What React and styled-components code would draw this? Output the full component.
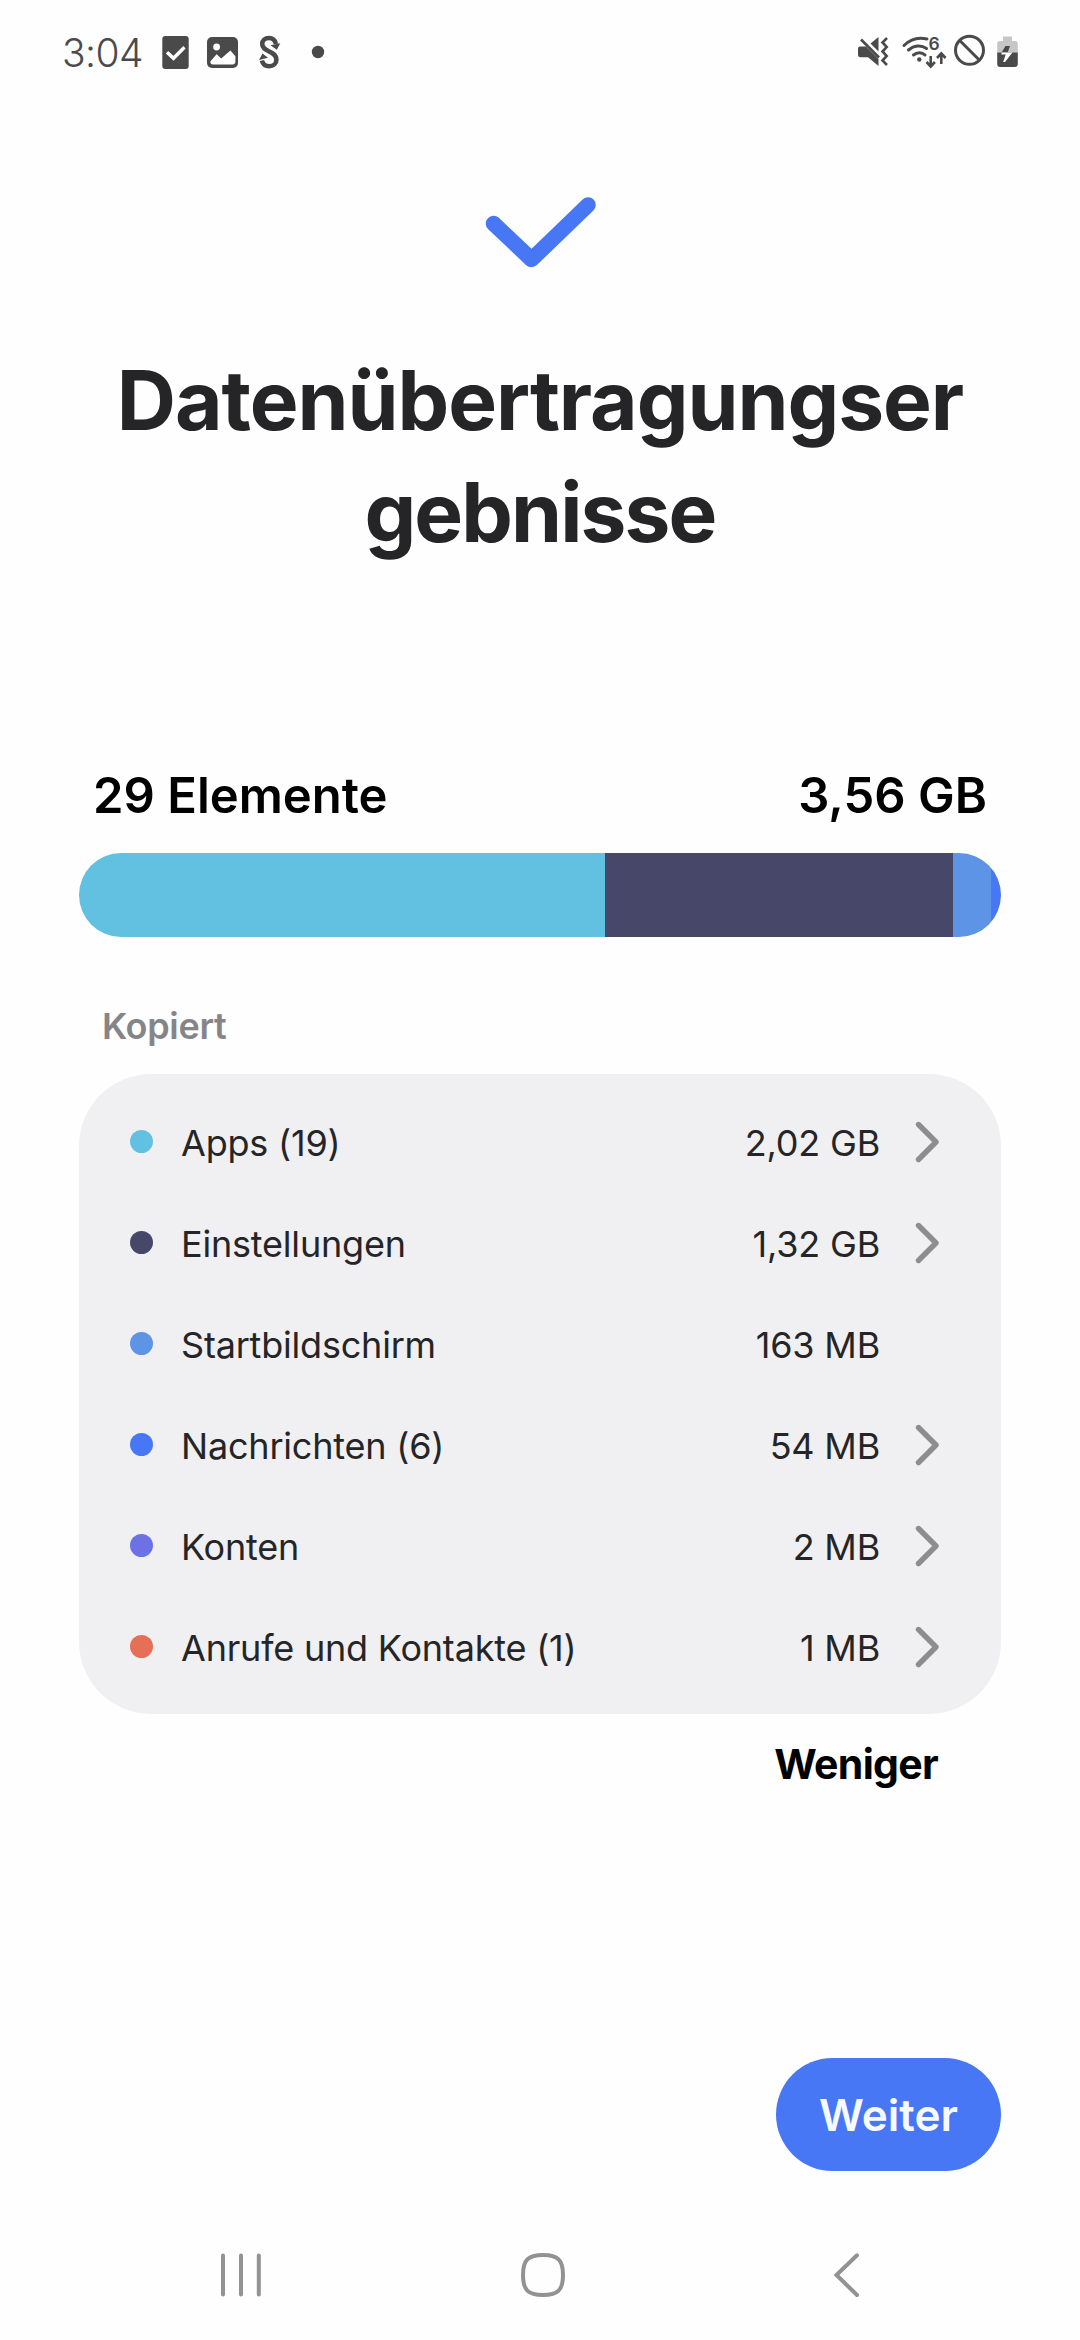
import React from 'react';
import styled, { createGlobalStyle } from 'styled-components'

const GlobalStyle = createGlobalStyle`
    body {
        margin: 0;
        background-color: #fefefe;
        font-family: Inter, Roboto, sans-serif;
    }
`;

const items = [
    { label: 'Apps (19)', size: '2,02 GB', color: '#62c1e1', share: 526, more: true },
    { label: 'Einstellungen', size: '1,32 GB', color: '#474769', share: 348, more: true },
    { label: 'Startbildschirm', size: '163 MB', color: '#5e94e6', share: 38, more: false },
    { label: 'Nachrichten (6)', size: '54 MB', color: '#4777f5', share: 10, more: true },
    { label: 'Konten', size: '2 MB', color: '#6d71e6', share: 0, more: true },
    { label: 'Anrufe und Kontakte (1)', size: '1 MB', color: '#e66f57', share: 0, more: true },
];

const NotificationIcons = () => (
    <svg width="170" height="40" viewBox="158 32 170 40" fill="none">
        <rect x="162.3" y="36" width="26.4" height="33" rx="3" fill="#4a4a4a" />
        <path d="M167 52.3l6.5 6 11-11" stroke="#fff" strokeWidth="3.4" />
        <rect x="207" y="37" width="31" height="31" rx="5" fill="#4a4a4a" />
        <circle cx="216.6" cy="47" r="3.4" fill="#fff" />
        <path d="M210.3 61.5l6.3-7.3 4.6 4.2 9.2-8 5 5.8v5.4q0 2.8-2.8 2.8h-19.5q-2.8 0-2.8-2.9z" fill="#fff" />
        <path d="M276 44c-1-4-3.6-6-7-6-4 0-6.8 2.6-6.800 6 0 4 3.300 5.700 7 7.500 4.200 2 7.200 3.700 7.200 8.200 0 3.800-3 6.600-7.200 6.600-3.700 0-6.400-2.200-7.300-5.800" stroke="#4a4a4a" strokeWidth="4.6" />
        <path d="M270.500 45.300l9.800-2-3.500 6.500zM268 57.800l-9 2.200 3.500-6.500z" fill="#4a4a4a" />
        <circle cx="318" cy="52" r="6.2" fill="#4a4a4a" />
    </svg>
)

const SystemIcons = () => (
    <svg width="166" height="40" viewBox="856 30 166 40" fill="none">
        <path d="M860 46.500h6l12.500 12.500v7l-10.500-8.800h-8q-2-.2-2-2.200v-6.500q0-2 2-2zM870.500 43.500l8-6.500v14.500z" fill="#4a4a4a" />
        <path d="M861 39.500l18 18" stroke="#4a4a4a" strokeWidth="2.6" />
        <path d="M887 38l-4.500 4.500 4.200 4.500-4.200 4.500 4.200 4.500-4.200 4.500 4.500 4.500" stroke="#4a4a4a" strokeWidth="2.6" />
        <path d="M904 45.500c7-7 15-8.500 23-6.500M908.500 50c5.500-4.800 12.500-5.500 18-1.500M913.500 55c3.500-3 8.500-3 11.500 0" stroke="#4a4a4a" strokeWidth="3" strokeLinecap="round" />
        <circle cx="919.3" cy="59.5" r="2.2" fill="#4a4a4a" />
        <text x="928.6" y="49.8" fontSize="17.5" fontWeight="600" fill="#4a4a4a">6</text>
        <path d="M930.700 56v10M926.500 62l4.200 4.500 4.200-4.500M941.300 64v-10M937 58l4.300-4.500 4.300 4.500" stroke="#4a4a4a" strokeWidth="2.6" />
        <circle cx="969.5" cy="50.3" r="14" stroke="#4a4a4a" strokeWidth="3" />
        <path d="M959.500 40.300l20 20" stroke="#4a4a4a" strokeWidth="3" />
        <path d="M1003 36.500h9v4.500h3q2.800 0 2.800 2.800v9h-20.600v-9q0-2.800 2.800-2.800h3z" fill="#c6c6c6" />
        <path d="M997.200 52.500h20.600v11.500q0 3-3 3h-14.600q-3 0-3-3z" fill="#4a4a4a" />
        <path d="M1005.500 46h4.500l-2.300 6.500h-6.200z" fill="#4a4a4a" />
        <path d="M1001.500 52.500h11l-7.500 9.500h-1.800l2.500-7.500h-4.200z" fill="#fff" />
    </svg>
)

const Chevron = () => (
    <svg width="30" height="44" viewBox="0 0 30 44" fill="none">
        <path d="M4.5 4.5L22 22L4.5 39.5" stroke="#8d8d8f" strokeWidth="5.4" strokeLinecap="round" strokeLinejoin="round" />
    </svg>
)

const App = () => {
    return (
        <Screen>
            <GlobalStyle />
            <StatusBar>
                <Time>3:04</Time>
                <NotificationIcons />
                <SystemSide>
                    <SystemIcons />
                </SystemSide>
            </StatusBar>
            <Hero>
                <svg width="120" height="80" viewBox="480 192 120 80" fill="none">
                    <path d="M493.500 223.500L531.500 259.500L588 205" stroke="#4777f5" strokeWidth="15.5" strokeLinecap="round" strokeLinejoin="round" />
                </svg>
                <Title>
                    <TitleLine $spacing="-1.05px">Datenübertragungser</TitleLine>
                    <TitleLine $spacing="-1.9px">gebnisse</TitleLine>
                </Title>
            </Hero>
            <Summary>
                <span>29 Elemente</span>
                <span>3,56 GB</span>
            </Summary>
            <UsageBar>
                {items.map(item => (
                    <Segment key={item.label} $color={item.color} $share={item.share} />
                ))}
            </UsageBar>
            <SectionLabel>Kopiert</SectionLabel>
            <Card>
                {items.map(item => (
                    <Row key={item.label}>
                        <Dot $color={item.color} />
                        <Label>{item.label}</Label>
                        <Size>{item.size}</Size>
                        <Arrow>{item.more && <Chevron />}</Arrow>
                    </Row>
                ))}
            </Card>
            <LessButton>Weniger</LessButton>
            <Footer>
                <NextButton>Weiter</NextButton>
            </Footer>
            <NavBar>
                <svg width="48" height="50" viewBox="217 2250 48 50" fill="none">
                    <path d="M223 2255.500v39M241 2255.500v39M258.800 2255.500v39" stroke="#929292" strokeWidth="4" strokeLinecap="round" />
                </svg>
                <svg width="58" height="50" viewBox="518 2250 58 50" fill="none">
                    <path d="M543 2255c15 0 20 5 20 20s-5 20-20 20-20-5-20-20 5-20 20-20z" stroke="#929292" strokeWidth="4" />
                </svg>
                <svg width="36" height="50" viewBox="829 2250 36 50" fill="none">
                    <path d="M857 2255.300L836.500 2275L857 2295" stroke="#929292" strokeWidth="4" strokeLinecap="round" />
                </svg>
            </NavBar>
        </Screen>
    )
}

const Screen = styled.div`
    display: flex;
    flex-direction: column;
    width: 1080px;
    height: 2340px;
    background-color: #fefefe;
    overflow: hidden;
`;

const StatusBar = styled.header`
    display: flex;
    align-items: center;
    height: 104px;
    padding: 0 58px 0 62px;
    box-sizing: border-box;
`;

const Time = styled.span`
    width: 96px;
    font-size: 39px;
    font-weight: 350;
    letter-spacing: -0.6px;
    color: #4a4a4a;
`;

const SystemSide = styled.div`
    display: flex;
    margin-left: auto;
    margin-top: -4px;
`;

const Hero = styled.section`
    display: flex;
    flex-direction: column;
    align-items: center;
    padding-top: 88px;
`;

const Title = styled.h1`
    margin: 73px 0 0;
    font-size: 82px;
    line-height: 112px;
    font-weight: 700;
    text-align: center;
    color: #252527;
`;

const TitleLine = styled.span`
    display: block;
    letter-spacing: ${props => props.$spacing};
`;

const Summary = styled.div`
    display: flex;
    justify-content: space-between;
    margin-top: 197px;
    padding: 0 93px;
    font-size: 49px;
    line-height: 60px;
    font-weight: 600;
    color: #000;
`;

const UsageBar = styled.div`
    display: flex;
    flex-shrink: 0;
    height: 84px;
    margin: 27px 79px 0;
    border-radius: 42px;
    overflow: hidden;
`;

const Segment = styled.div`
    flex: ${props => props.$share} 0 0;
    background-color: ${props => props.$color};
`;

const SectionLabel = styled.h2`
    margin: 67px 0 0 102px;
    font-size: 36px;
    line-height: 44px;
    font-weight: 600;
    letter-spacing: -0.3px;
    color: #858587;
`;

const Card = styled.div`
    height: 640px;
    margin: 26px 79px 0;
    padding: 17px 51px 0 51px;
    box-sizing: border-box;
    border-radius: 72px;
    background-color: #f0f0f2;
`;

const Row = styled.div`
    display: flex;
    align-items: center;
    height: 101px;
    font-size: 36px;
    line-height: 44px;
    letter-spacing: -0.2px;
    color: #252527;
`;

const Dot = styled.span`
    width: 23px;
    height: 23px;
    margin-right: 28px;
    border-radius: 50%;
    background-color: ${props => props.$color};
`;

const Label = styled.span`
    margin-top: 3px;
`;

const Size = styled.span`
    margin: 3px 0 0 auto;
`;

const Arrow = styled.span`
    display: flex;
    width: 36px;
    margin-left: 34px;
`;

const LessButton = styled.button`
    align-self: flex-end;
    margin: 25px 142px 0 0;
    padding: 0;
    border: none;
    background: none;
    font-family: inherit;
    font-size: 41px;
    line-height: 50px;
    font-weight: 700;
    letter-spacing: -0.7px;
    color: #000;
`;

const Footer = styled.div`
    display: flex;
    justify-content: flex-end;
    margin-top: 269px;
    padding-right: 79px;
`;

const NextButton = styled.button`
    width: 225px;
    height: 113px;
    padding: 0;
    border: none;
    border-radius: 57px;
    background-color: #4777f5;
    font-family: inherit;
    font-size: 44px;
    font-weight: 600;
    color: #f6f9ff;
`;

const NavBar = styled.nav`
    display: flex;
    justify-content: space-between;
    margin-top: 79px;
    padding: 0 215px 0 217px;
`;

export default App
